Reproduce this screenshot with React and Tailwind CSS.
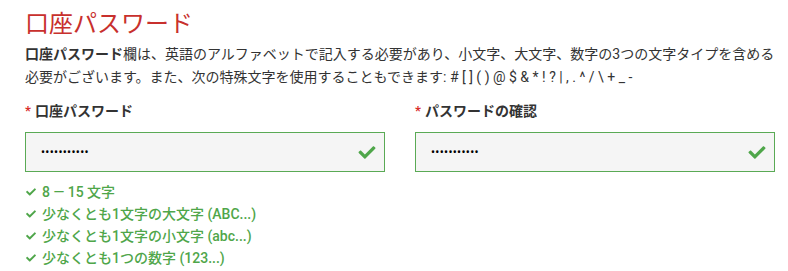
import React from "react";
import { FaCheck } from "react-icons/fa";

const font = { fontFamily: 'Roboto, "Noto Sans CJK JP", sans-serif' };

function Field({ label }) {
  return (
    <div className="flex flex-col">
      <div className="flex items-center h-[22px] text-[14px] font-bold text-[#333]">
        <span className="text-[#d9302c] mr-[4px] text-[13px]">*</span>
        {label}
      </div>
      <div className="mt-[10px] h-[40px] border border-[#5aaa55] bg-[#f5f5f5] flex items-center justify-between pl-[15px] pr-[7px]">
        <input
          type="password"
          readOnly
          value="abcdefghijk"
          className="bg-transparent outline-none text-[12px] tracking-[0.3px] text-black w-[200px]"
          style={font}
        />
        <FaCheck className="text-[#4fa64a] w-[20px] h-[17px]" />
      </div>
    </div>
  );
}

const reqs = [
  "8 — 15 文字",
  "少なくとも1文字の大文字 (ABC...)",
  "少なくとも1文字の小文字 (abc...)",
  "少なくとも1つの数字 (123...)",
];

export default function App() {
  return (
    <div className="w-[788px] h-[271px] bg-white pl-[25px] pr-[13px] pt-[8px]" style={font}>
      <h1 className="text-[24px] leading-[32px] text-[#c8302d] font-normal">口座パスワード</h1>
      <p className="mt-[3px] text-[14px] leading-[23px] text-[#333]">
        <b className="font-bold">口座パスワード</b>欄は、英語のアルファベットで記入する必要があり、小文字、大文字、数字の3つの文字タイプを含める必要がございます。また、次の特殊文字を使用することもできます: # [ ] ( ) @ $ & * ! ? | , . ^ / \ + _ -
      </p>
      <div className="mt-[11px] grid grid-cols-2 gap-[30px]">
        <Field label="口座パスワード" />
        <Field label="パスワードの確認" />
      </div>
      <ul className="mt-[9px] flex flex-col text-[14px] leading-[22px] font-medium text-[#4fa64a]">
        {reqs.map((r) => (
          <li key={r} className="flex items-center">
            <FaCheck className="w-[12px] h-[10px] mr-[5px]" />
            {r}
          </li>
        ))}
      </ul>
    </div>
  );
}
